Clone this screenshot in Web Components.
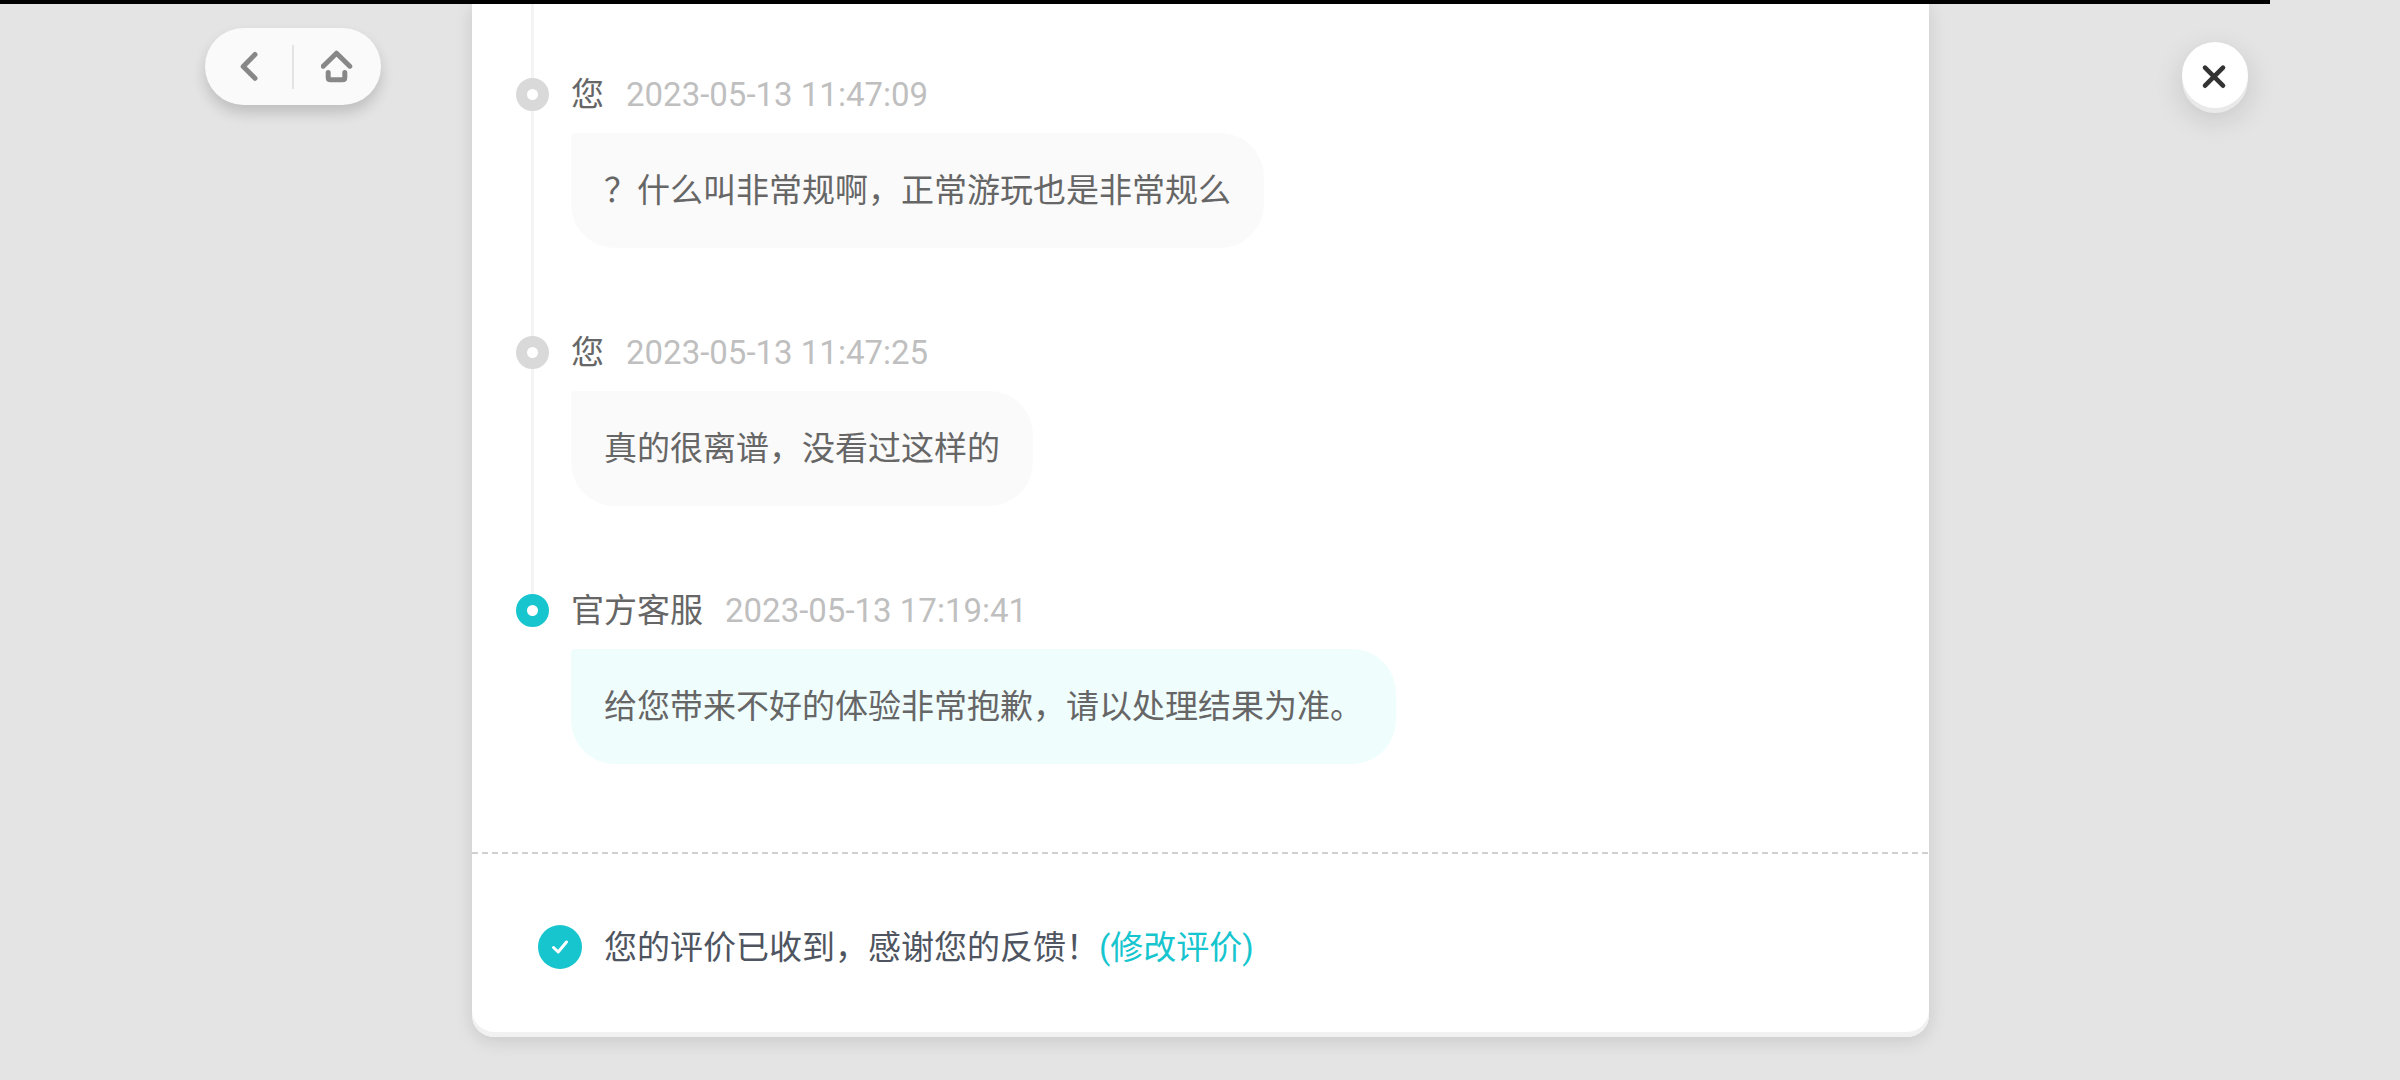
<!DOCTYPE html>
<html lang="zh-CN">
<head>
<meta charset="utf-8">
<meta name="viewport" content="width=device-width, initial-scale=1">
<title>反馈详情</title>
<style>
  body {
    margin: 0;
    min-height: 100vh;
    background: #e4e4e4;
    color: #666;
    font: 33px/33px Roboto, "Noto Sans CJK SC", sans-serif;
  }
</style>
</head>
<body>
<feedback-app></feedback-app>

<script>
/**
 * Creates a template element from markup.
 *
 * @param {string} html - The markup.
 * @returns {HTMLTemplateElement} The template.
 */
const createTemplate = html => {
  const template = document.createElement('template')
  template.innerHTML = html
  return template
}

const navTemplate = createTemplate(`
  <style>
    :host {
      display: flex;
      align-items: center;
      width: 176px;
      height: 77px;
      border-radius: 40px;
      background: #fafafa;
      box-shadow: 0 8px 14px rgba(0, 0, 0, .16);
    }
    button {
      flex: 1;
      display: grid;
      place-items: center;
      height: 100%;
      padding: 0;
      border: 0;
      background: none;
      cursor: pointer;
    }
    span {
      width: 2px;
      height: 44px;
      background: #e3e3e3;
    }
    svg {
      width: 34px;
      height: 34px;
      fill: none;
      stroke: #888;
      stroke-width: 5;
      stroke-linecap: round;
      stroke-linejoin: round;
    }
  </style>
  <button type="button" aria-label="返回">
    <svg viewBox="0 0 34 34"><path d="M23 4.5 11.2 16.4 23 28.3"/></svg>
  </button>
  <span></span>
  <button type="button" aria-label="首页">
    <svg viewBox="0 0 34 34">
      <path d="M2.2 16.2 15.5 3.2l13.3 13"/>
      <path d="M7.2 22.4v5q0 2.4 2.4 2.4h11.8q2.4 0 2.4-2.4v-5"/>
    </svg>
  </button>
`)

customElements.define('nav-pill',
  /**
   * Represents the back and home buttons.
   */
  class extends HTMLElement {
    /**
     * Creates an instance of the current type.
     */
    constructor () {
      super()
      this.attachShadow({ mode: 'open' }).appendChild(navTemplate.content.cloneNode(true))
    }
  }
)

const closeTemplate = createTemplate(`
  <style>
    :host {
      display: block;
    }
    button {
      display: grid;
      place-items: center;
      width: 66px;
      height: 66px;
      padding: 0;
      border: 0;
      border-radius: 50%;
      background: #fff;
      box-shadow: 0 5px 0 #e9e9e9, 0 10px 30px rgba(0, 0, 0, .14);
      cursor: pointer;
    }
    svg {
      width: 34px;
      height: 34px;
      fill: none;
      stroke: #333;
      stroke-width: 4.6;
      stroke-linecap: round;
    }
  </style>
  <button type="button" aria-label="关闭">
    <svg viewBox="0 0 34 34"><path d="m7 9.7 18 18m0-18-18 18"/></svg>
  </button>
`)

customElements.define('close-button',
  /**
   * Represents the round close button.
   */
  class extends HTMLElement {
    /**
     * Creates an instance of the current type.
     */
    constructor () {
      super()
      this.attachShadow({ mode: 'open' }).appendChild(closeTemplate.content.cloneNode(true))
    }
  }
)

const messageTemplate = createTemplate(`
  <style>
    :host {
      --accent: #d9d9d9;
      --bubble: #fafafa;
      display: grid;
      grid-template-columns: 33px minmax(0, 1fr);
      column-gap: 22px;
    }
    :host([official]) {
      --accent: #16c5ce;
      --bubble: #f0fdfd;
    }
    .rail {
      display: flex;
      flex-direction: column;
      align-items: center;
    }
    .dot {
      box-sizing: border-box;
      width: 33px;
      height: 33px;
      border: 11px solid var(--accent);
      border-radius: 50%;
      background: #fff;
    }
    .line {
      flex: 1;
      width: 3px;
      background: #f4f4f4;
    }
    :host(:last-of-type) .line {
      display: none;
    }
    .body {
      padding-bottom: 88px;
    }
    header {
      display: flex;
      gap: 22px;
    }
    time {
      color: #bfbfbf;
    }
    p {
      width: fit-content;
      margin: 22px 0 0;
      padding: 41px 33px;
      border-radius: 4px 44px 44px 44px;
      background: var(--bubble);
    }
  </style>
  <div class="rail"><div class="dot"></div><div class="line"></div></div>
  <div class="body">
    <header><slot name="author"></slot><time></time></header>
    <p><slot></slot></p>
  </div>
`)

customElements.define('message-item',
  /**
   * Represents one message on the timeline.
   */
  class extends HTMLElement {
    /**
     * Creates an instance of the current type.
     */
    constructor () {
      super()
      this.attachShadow({ mode: 'open' }).appendChild(messageTemplate.content.cloneNode(true))
    }

    /**
     * Called when the element is added to the page.
     */
    connectedCallback () {
      this.shadowRoot.querySelector('time').textContent = this.getAttribute('time')
    }
  }
)

const ratingTemplate = createTemplate(`
  <style>
    :host {
      display: flex;
      align-items: center;
      gap: 22px;
      padding: 71px 66px 68px;
      color: #4e5460;
    }
    svg {
      flex: none;
      width: 44px;
      height: 44px;
    }
    ::slotted(a) {
      color: #16c5ce;
      text-decoration: none;
    }
  </style>
  <svg viewBox="0 0 44 44" aria-hidden="true">
    <circle cx="22" cy="22" r="22" fill="#16c5ce"/>
    <path d="m15.5 22.5 4.7 4.5 8.3-10" fill="none" stroke="#fff" stroke-width="3" stroke-linecap="round" stroke-linejoin="round"/>
  </svg>
  <div><slot></slot></div>
`)

customElements.define('rating-note',
  /**
   * Represents the note about the received rating.
   */
  class extends HTMLElement {
    /**
     * Creates an instance of the current type.
     */
    constructor () {
      super()
      this.attachShadow({ mode: 'open' }).appendChild(ratingTemplate.content.cloneNode(true))
    }
  }
)

const appTemplate = createTemplate(`
  <style>
    :host {
      display: block;
    }
    .progress {
      height: 4px;
      margin-right: 130px;
      background: #000;
    }
    .layout {
      display: grid;
      grid-template-columns: 472px minmax(0, 1fr) 471px;
      align-items: start;
    }
    nav-pill {
      margin: 24px 0 0 205px;
    }
    close-button {
      justify-self: end;
      margin: 38px 152px 0 0;
    }
    main {
      border-radius: 0 0 22px 22px;
      background: #fff;
      box-shadow: inset 0 -5px 0 #f1f1f1, 0 4px 18px rgba(0, 0, 0, .12);
    }
    .timeline {
      padding: 0 44px;
    }
    /* the thread continues above the first message */
    .lead {
      width: 3px;
      height: 74px;
      margin-left: 15px;
      background: #f4f4f4;
    }
    .divider {
      height: 2px;
      background: repeating-linear-gradient(90deg, #d0d0d0 0 6px, transparent 6px 10px);
    }
  </style>
  <div class="progress"></div>
  <div class="layout">
    <nav-pill></nav-pill>
    <main>
      <div class="timeline">
        <div class="lead"></div>
        <message-item time="2023-05-13 11:47:09"><span slot="author">您</span>？什么叫非常规啊，正常游玩也是非常规么</message-item>
        <message-item time="2023-05-13 11:47:25"><span slot="author">您</span>真的很离谱，没看过这样的</message-item>
        <message-item time="2023-05-13 17:19:41" official><span slot="author">官方客服</span>给您带来不好的体验非常抱歉，请以处理结果为准。</message-item>
      </div>
      <div class="divider"></div>
      <rating-note>您的评价已收到，感谢您的反馈！<a href="#rating">(修改评价)</a></rating-note>
    </main>
    <close-button></close-button>
  </div>
`)

customElements.define('feedback-app',
  /**
   * Represents the feedback page.
   */
  class extends HTMLElement {
    /**
     * Creates an instance of the current type.
     */
    constructor () {
      super()
      this.attachShadow({ mode: 'open' }).appendChild(appTemplate.content.cloneNode(true))
    }
  }
)
</script>
</body>
</html>
